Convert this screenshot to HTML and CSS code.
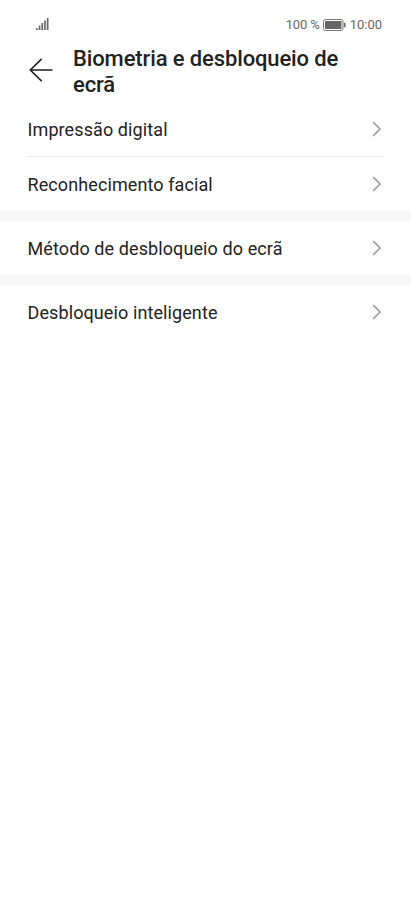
FILE: index.html
```html
<!DOCTYPE html>
<html lang="pt">
<head>
<meta charset="utf-8">
<title>Biometria e desbloqueio de ecrã</title>
<link rel="stylesheet" href="styles.css">
</head>
<body>
<div class="status">
  <svg class="signal" width="14" height="12" viewBox="0 0 14 12"><path d="M0 10h1.700v2H0zM2.700 7.500h1.700v4.500H2.700zM5.400 5h1.700v7H5.400zM8.100 2.500h1.700v9.500H8.100zM10.800 0h1.700v12h-1.700z"/></svg>
  <div class="right">
    <span class="pct">100 %</span>
    <svg class="battery" width="23" height="12" viewBox="0 0 23 12"><rect class="shell" x=".5" y=".5" width="19.500" height="11" rx="2"/><rect x="2" y="2" width="16.500" height="8" rx=".7"/><path d="M21 3.700h1.500v4.600H21z"/></svg>
    <span class="time">10:00</span>
  </div>
</div>
<header class="header">
  <svg class="back" width="24" height="24" viewBox="0 0 24 24"><path d="M23.600 12H1.500M12.700 .9L1.300 12 12.700 23.100"/></svg>
  <h1 class="title">Biometria e desbloqueio de ecrã</h1>
</header>
<main>
  <section class="group">
    <div class="row"><span>Impressão digital</span><svg class="chevron" width="10" height="16" viewBox="0 0 10 16"><path d="M1.200 1.200L8 8l-6.800 6.800"/></svg></div>
    <div class="row"><span>Reconhecimento facial</span><svg class="chevron" width="10" height="16" viewBox="0 0 10 16"><path d="M1.200 1.200L8 8l-6.800 6.800"/></svg></div>
  </section>
  <section class="group">
    <div class="row"><span>Método de desbloqueio do ecrã</span><svg class="chevron" width="10" height="16" viewBox="0 0 10 16"><path d="M1.200 1.200L8 8l-6.800 6.800"/></svg></div>
  </section>
  <section class="group">
    <div class="row"><span>Desbloqueio inteligente</span><svg class="chevron" width="10" height="16" viewBox="0 0 10 16"><path d="M1.200 1.200L8 8l-6.800 6.800"/></svg></div>
  </section>
</main>
</body>
</html>
```
FILE: styles.css
```css
* { box-sizing: border-box; }
body { margin: 0; background: #fff; color: #222; font-family: Roboto, sans-serif; }
.status { height: 44px; padding: 5px 29px 0 36px; display: flex; align-items: center; justify-content: space-between; font-size: 13px; color: #666; }
.status svg { fill: #666; display: block; }
.signal { margin-bottom: 1px; }
.right { display: flex; align-items: center; }
.pct { letter-spacing: -0.15px; }
.battery { margin: 0 4px 0 3px; }
.battery .shell { fill: none; stroke: #777; }
.header { height: 58px; padding: 2px 29px 0; display: flex; align-items: flex-start; }
.back { margin: 11.500px 20px 0 0; flex: none; fill: none; stroke: #202020; stroke-width: 1.6; }
.title { margin: 0; font-size: 22px; line-height: 25.500px; font-weight: 500; letter-spacing: -0.12px; width: 290px; }
.row { height: 54px; margin: 0 27.500px; display: flex; align-items: center; justify-content: space-between; font-size: 18px; letter-spacing: 0.1px; }
.row + .row { height: 55px; border-top: 1px solid #e8e8e8; }
.group + .group { border-top: 10px solid #f7f7f7; }
.chevron { margin: 0 2px 0 0; fill: none; stroke: #a0a0a0; stroke-width: 1.7; }
```
